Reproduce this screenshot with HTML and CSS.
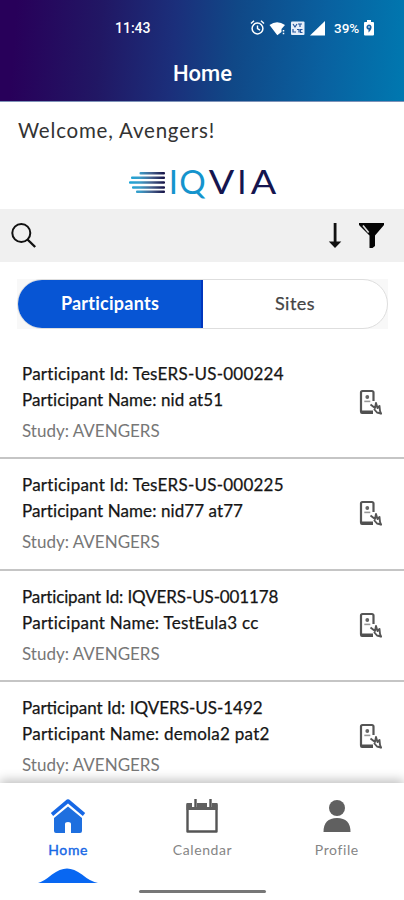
FILE: index.html
```html
<!DOCTYPE html>
<html lang="en">
<head>
<meta charset="utf-8">
<title>Home</title>
<link rel="stylesheet" href="styles.css">
</head>
<body>
<svg class="defs" width="0" height="0" aria-hidden="true">
  <symbol id="device" viewBox="0 0 24 26">
    <path d="M15.500 12V3.500a1.500 1.500 0 0 0-1.500-1.500H4.500A1.500 1.500 0 0 0 3 3.500v19" fill="none" stroke="#555" stroke-width="2.200"/>
    <path d="M2 21.500h13v3.500H4q-2 0-2-2z" fill="#505050"/>
    <circle cx="9.300" cy="8" r="1.900" fill="#666"/>
    <path d="M6.300 12.400h6" stroke="#999" stroke-width="1.600"/>
    <path d="M12.500 15.500l4.500 3.500 1-5 1.500 5 2-2 .5 5 1.500 3.500M16 20l3 3.500 4 1" fill="none" stroke="#555" stroke-width="1.900" stroke-linejoin="round"/>
  </symbol>
</svg>
<div class="app">
  <header class="top">
    <div class="status">
      <span class="time">11:43</span>
      <svg class="status-icons" width="78" height="18" viewBox="0 0 78 18" fill="none" stroke="#fff">
        <circle cx="8.500" cy="9.500" r="5.400" stroke-width="1.500"/>
        <path d="M8.500 6.500v3.200l2.500 1.500M2 4.500l3-2.700M15 4.500l-3-2.700" stroke-width="1.400"/>
        <path d="M20.500 6Q28 .500 36 6l-3.500 4v3l-4.200 3.200z" fill="#fff" stroke="none"/>
        <path d="M34.500 11v1.500M34.500 13.700v1.600" stroke-width="1.500"/>
        <rect x="42" y="2.500" width="13.500" height="13.500" rx="1" fill="#e6eef9" stroke="none"/>
        <path d="M44 5l2 3 2-3M49 5h4M51 5v3M44 10v3h3M48 10.500h2v3M53.500 10.500h-2v3h2" stroke="#23559d" stroke-width="1.200"/>
        <path d="M61 16.500L76 2v14.500z" fill="#fff" stroke="none"/>
      </svg>
      <span class="pct">39%</span>
      <svg class="battery" width="10" height="16" viewBox="0 0 10 16"><path d="M3 0h4v2h2q1 0 1 1v11.500q0 1-1 1H1q-1 0-1-1V3q0-1 1-1h2z" fill="#fff"/><path d="M5 4.500Q2 5 2.500 8q.5 1.500 2 1.500V12.500Q8 9.500 7.500 6.500 7 4.500 5 4.500z" fill="#1460a5"/><path d="M5 6v2" stroke="#fff"/></svg>
    </div>
    <h1>Home</h1>
  </header>
  <section class="intro">
    <p class="welcome">Welcome, Avengers!</p>
    <svg class="logo" width="150" height="48" viewBox="128 156 150 48">
      <defs><linearGradient id="bar" gradientUnits="userSpaceOnUse" x1="129" y1="0" x2="165" y2="0"><stop offset="0" stop-color="#18a5d8"/><stop offset=".3" stop-color="#3a9cc8"/><stop offset=".62" stop-color="#46618e"/><stop offset="1" stop-color="#141044"/></linearGradient></defs>
      <g fill="url(#bar)">
        <rect x="139.500" y="172" width="25.500" height="2.500" rx="1"/>
        <rect x="131" y="176.500" width="34" height="2.500" rx="1"/>
        <rect x="129" y="181.200" width="36" height="2.500" rx="1"/>
        <rect x="132" y="186.200" width="33" height="2.500" rx="1"/>
        <rect x="136" y="190.500" width="29" height="2.500" rx="1"/>
      </g>
      <g class="logo-text">
        <text class="cyan" x="168.800" y="194">I</text>
        <text class="cyan" x="179.300" y="194">Q</text>
        <text x="208.800" y="194" textLength="25.500" lengthAdjust="spacingAndGlyphs">V</text>
        <text x="237.300" y="194">I</text>
        <text x="250.700" y="194" textLength="25.500" lengthAdjust="spacingAndGlyphs">A</text>
      </g>
    </svg>
  </section>
  <div class="toolbar">
    <svg width="26" height="28" viewBox="0 0 26 28" fill="none" stroke="#111"><circle cx="10.300" cy="11" r="9" stroke-width="2"/><path d="M16.500 17.500l7.700 7.500" stroke-width="2.400"/></svg>
    <span class="grow"></span>
    <svg width="14" height="26" viewBox="0 0 14 26"><path d="M5.700 0h2.800v18.500h4.800L7 25 .800 18.500h4.900z" fill="#111"/></svg>
    <svg class="funnel" width="25" height="26" viewBox="0 0 25 26"><path d="M0 0h25v2l-9 10.500v10.500l-2.500 2h-3v-12.500L0 2z" fill="#050505"/><path d="M4 2.500l5.700 7" stroke="#ddd" stroke-width="1.700"/></svg>
  </div>
  <div class="tabs-area">
    <div class="tabs">
      <div class="tab active">Participants</div>
      <div class="tab">Sites</div>
    </div>
  </div>
  <main class="list">
    <article class="row"><div><p class="id">Participant Id: TesERS-US-000224</p><p class="name tight">Participant Name: nid at51</p><p class="study">Study: AVENGERS</p></div><svg class="device"><use href="#device"/></svg></article>
    <article class="row"><div><p class="id">Participant Id: TesERS-US-000225</p><p class="name tight">Participant Name: nid77 at77</p><p class="study">Study: AVENGERS</p></div><svg class="device"><use href="#device"/></svg></article>
    <article class="row"><div><p class="id narrow">Participant Id: IQVERS-US-001178</p><p class="name">Participant Name: TestEula3 cc</p><p class="study">Study: AVENGERS</p></div><svg class="device"><use href="#device"/></svg></article>
    <article class="row"><div><p class="id snug">Participant Id: IQVERS-US-1492</p><p class="name">Participant Name: demola2 pat2</p><p class="study">Study: AVENGERS</p></div><svg class="device"><use href="#device"/></svg></article>
  </main>
  <nav class="bottom">
    <div class="items">
      <div class="item on">
        <svg width="36" height="36" viewBox="0 0 36 36"><path d="M2 16.500L18 3l16 13.500" fill="none" stroke="#1768e5" stroke-width="3.600" stroke-linejoin="round"/><path d="M4 20L18 8.500 32 20v13q0 2-2 2h-9V26q0-2-3-2t-3 2v9H6q-2 0-2-2z" fill="#1e6fdf"/></svg>
        <span>Home</span>
        <svg class="hump" width="60" height="15" viewBox="0 0 60 15"><path d="M0 15Q5 14 14 6.500 22 .500 29 .500T44 6.500Q53 14 60 15z" fill="#0867f2"/></svg>
      </div>
      <div class="item">
        <svg width="36" height="36" viewBox="0 0 36 36"><path d="M3.500 7h29v26.500h-29z" fill="#fff" stroke="#555" stroke-width="2.400" stroke-linejoin="round"/><path d="M2.500 5h31v7h-31z" fill="#606060"/><path d="M10.500 1v8M25.500 1v8" stroke="#fff" stroke-width="5"/><path d="M11.500 1v8M26.500 1v8" stroke="#555" stroke-width="2.400"/></svg>
        <span>Calendar</span>
      </div>
      <div class="item">
        <svg width="36" height="36" viewBox="0 0 36 36" fill="#606060"><circle cx="18" cy="10" r="8"/><path d="M4.500 34q0-14 13.500-14t13.500 14z"/></svg>
        <span>Profile</span>
      </div>
    </div>
    <div class="handle"></div>
  </nav>
</div>
</body>
</html>
```
FILE: styles.css
```css
* { box-sizing: border-box; }
body { margin: 0; background: #fff; font-family: Lato, "Liberation Sans", sans-serif; }
p, h1 { margin: 0; white-space: nowrap; }
svg { display: block; flex: none; }
.defs { position: absolute; }
.app { width: 404px; height: 900px; overflow: hidden; position: relative; display: flex; flex-direction: column; }
.top { height: 102px; flex: none; background: linear-gradient(94deg, #28005a 4%, #211764 25%, #1b2f7b 43%, #104887 58%, #0961a0 80%, #0078b0 100%); border-bottom: 1px solid #7d92b8; color: #fff; font-family: Roboto, sans-serif; }
.status { height: 56px; display: flex; align-items: center; padding: 0 30px 0 115px; font-size: 14px; font-weight: 500; }
.time { width: 134px; }
.pct { margin-left: 7px; width: 30px; font-size: 13.500px; }
h1 { font-size: 22px; line-height: 36px; font-weight: 500; text-align: center; padding-left: 1px; }
.intro { height: 107px; flex: none; padding-top: 14px; }
.welcome { padding-left: 18px; font-size: 20.500px; line-height: 28px; letter-spacing: .8px; color: #333; }
.logo { margin: 12px 0 0 128px; }
.logo-text { font-family: Lato, sans-serif; font-size: 33px; fill: #15154f; }
.logo-text .cyan { fill: #1594cd; }
.toolbar { height: 53px; flex: none; background: #f0f0f0; padding: 0 20px 0 11px; display: flex; align-items: center; }
.grow { flex: 1; }
.funnel { margin-left: 17px; }
.tabs-area { flex: none; margin: 17px 16px 0 17px; background: #f8f8f8; }
.tabs { height: 50px; display: flex; border: 1px solid #dedede; border-radius: 25px; overflow: hidden; background: #fff; }
.tab { flex: 1; display: flex; align-items: center; justify-content: center; font-size: 18px; letter-spacing: .5px; color: #444; padding-bottom: 2px; -webkit-text-stroke: .25px #444; }
.tab.active { flex: 0 0 186px; background: #0755d4; color: #fff; font-weight: 700; margin: -1px 0 -1px -1px; padding-left: 2px; border-right: 2px solid #0036bd; letter-spacing: .25px; -webkit-text-stroke: 0; }
.list { margin-top: 18px; flex: none; }
.row { height: 111.500px; border-bottom: 2px solid #c5c5c5; padding: 13px 22px 0; display: flex; justify-content: space-between; color: #151515; }
.list .row:first-child { height: 112px; padding-top: 14px; }
.id, .name { font-size: 17px; line-height: 26px; letter-spacing: .24px; -webkit-text-stroke: .25px #151515; }
.name { letter-spacing: .25px; }
.name.tight { letter-spacing: .08px; }
.id.narrow { letter-spacing: -.12px; }
.id.snug { letter-spacing: 0; }
.study { font-size: 17px; line-height: 24px; margin-top: 6px; color: #777; }
.device { width: 24px; height: 26px; margin-top: 28px; }
.bottom { position: absolute; left: 0; right: 0; bottom: 0; height: 117px; background: #fff; box-shadow: 0 -3px 10px rgba(0, 0, 0, .25); }
.items { display: flex; padding: 15px 0 0 1px; }
.item { width: 33.333%; display: flex; flex-direction: column; align-items: center; color: #858585; font-size: 14px; line-height: 20px; letter-spacing: .6px; }
.item span { margin-top: 6px; }
.on { color: #1768e5; }
.on span { -webkit-text-stroke: .4px #1768e5; }
.hump { margin-top: 8px; }
.handle { position: absolute; left: 139px; top: 107px; width: 127px; height: 3px; background: #777; border-radius: 2px; }
```
